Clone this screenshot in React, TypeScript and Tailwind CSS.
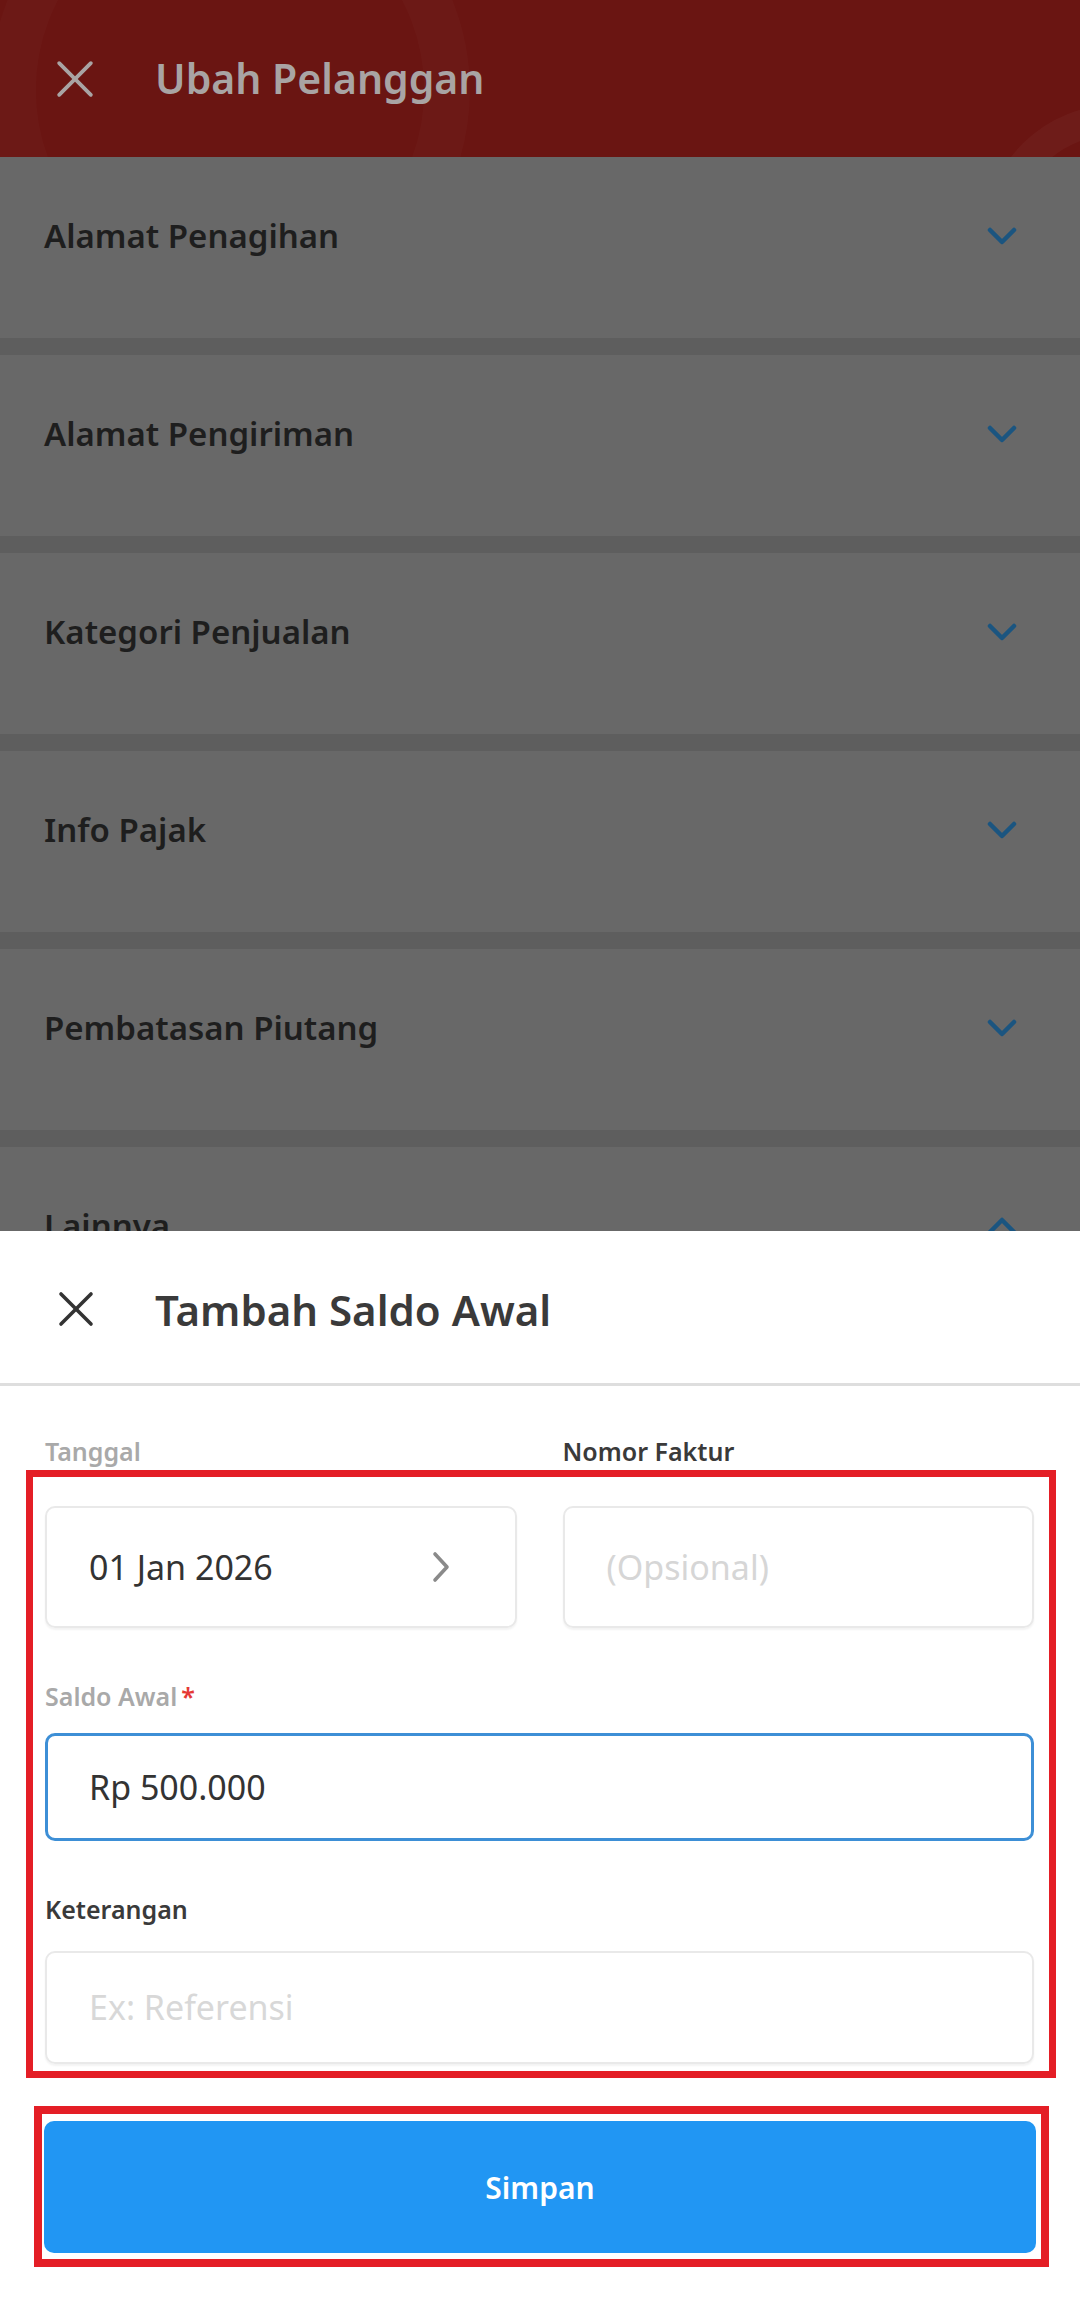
import React from "react";

const sections = [
  "Alamat Penagihan",
  "Alamat Pengiriman",
  "Kategori Penjualan",
  "Info Pajak",
  "Pembatasan Piutang",
];

function CloseIcon({ className }: { className?: string }) {
  return (
    <svg viewBox="0 0 36 36" className={className} fill="none" stroke="currentColor" strokeWidth="3.6" strokeLinecap="round">
      <line x1="3" y1="3" x2="33" y2="33" />
      <line x1="33" y1="3" x2="3" y2="33" />
    </svg>
  );
}

function Chevron({ up }: { up?: boolean }) {
  return (
    <svg viewBox="0 0 30 20" className="w-[30px] h-[20px] text-[#1b5580]" fill="none" stroke="currentColor" strokeWidth="4.5" strokeLinecap="round" strokeLinejoin="round">
      {up ? <polyline points="3,16 15,4 27,16" /> : <polyline points="3,4 15,16 27,4" />}
    </svg>
  );
}

function Section({ label, up }: { label: string; up?: boolean }) {
  return (
    <div className="h-[181px] shrink-0 bg-[#686868] pl-[44px] pr-[63px]">
      <div className="h-[158px] flex items-center justify-between">
        <span className="text-[33px] font-semibold text-[#1e1e1e]">{label}</span>
        <Chevron up={up} />
      </div>
    </div>
  );
}

export default function App() {
  return (
    <div
      className="w-[1080px] h-[2297px] overflow-hidden flex flex-col bg-white"
      style={{ fontFamily: '"Noto Sans", "Open Sans", sans-serif' }}
    >
      {/* dimmed page behind the sheet */}
      <div className="h-[1231px] shrink-0 overflow-hidden flex flex-col bg-[#5e5e5e]">
        <header className="relative h-[157px] shrink-0 overflow-hidden bg-[#6a1512] flex items-center pl-[56px]">
          <div className="absolute -left-[10px] -top-[150px] w-[480px] h-[480px] rounded-full border-[46px] border-white/[0.02]" />
          <div className="absolute left-[985px] top-[105px] w-[260px] h-[260px] rounded-full border-[30px] border-white/[0.03]" />
          <CloseIcon className="relative w-[38px] h-[38px] text-[#a9a4a4]" />
          <h1 className="relative ml-[61px] text-[41px] font-semibold text-[#a9a4a4]">Ubah Pelanggan</h1>
        </header>
        <div className="flex flex-col gap-[17px]">
          {sections.map((s) => (
            <Section key={s} label={s} />
          ))}
          <Section label="Lainnya" up />
        </div>
      </div>

      {/* bottom sheet */}
      <div className="flex-1 flex flex-col bg-white">
        <div className="h-[152px] shrink-0 flex items-center pl-[58px] pt-[4px]">
          <CloseIcon className="w-[36px] h-[36px] text-[#333333]" />
          <h2 className="ml-[61px] text-[42px] font-semibold text-[#3a3a3a]">Tambah Saldo Awal</h2>
        </div>
        <div className="h-[3px] bg-[#dedede]" />

        <div className="grid grid-cols-2 gap-[46px] pl-[45px] pr-[46px] pt-[50px]">
          <span className="text-[25px] leading-[30px] font-semibold text-[#a9a9a9]">Tanggal</span>
          <span className="text-[25px] leading-[30px] font-semibold text-[#3a3a3a]">Nomor Faktur</span>
        </div>

        <div className="ml-[26px] w-[1030px] mt-[4px] border-[7px] border-[#e41e26] pl-[12px] pr-[15px] pt-[29px] pb-[7px]">
          <div className="grid grid-cols-2 gap-[46px]">
            <div className="h-[122px] rounded-[10px] border-2 border-[#e9e9e9] shadow-[0_2px_2px_rgba(0,0,0,0.05)] flex items-center justify-between pl-[42px] pr-[64px]">
              <span className="text-[34px] text-[#333333]">01 Jan 2026</span>
              <svg viewBox="0 0 20 32" className="w-[20px] h-[32px] text-[#8a8a8a]" fill="none" stroke="currentColor" strokeWidth="3.6" strokeLinecap="round" strokeLinejoin="round">
                <polyline points="4,3 16,16 4,29" />
              </svg>
            </div>
            <div className="h-[122px] rounded-[10px] border-2 border-[#e9e9e9] shadow-[0_2px_2px_rgba(0,0,0,0.05)] flex items-center pl-[42px]">
              <span className="text-[34px] text-[#d6d6d6]">(Opsional)</span>
            </div>
          </div>

          <div className="mt-[53px] text-[25px] leading-[30px] font-semibold text-[#a9a9a9]">
            Saldo Awal<span className="ml-[4px] text-[#e53935]">*</span>
          </div>
          <div className="mt-[22px] h-[108px] rounded-[10px] border-[3px] border-[#3d8fd6] flex items-center pl-[41px]">
            <span className="text-[34px] text-[#333333]">Rp 500.000</span>
          </div>

          <div className="mt-[53px] text-[25px] leading-[30px] font-semibold text-[#3a3a3a]">Keterangan</div>
          <div className="mt-[27px] h-[113px] rounded-[10px] border-2 border-[#e9e9e9] shadow-[0_2px_2px_rgba(0,0,0,0.05)] flex items-center pl-[42px]">
            <span className="text-[34px] text-[#d8d8d8]">Ex: Referensi</span>
          </div>
        </div>

        <div className="ml-[34px] w-[1015px] mt-[28px] border-[8px] border-[#e41e26] pl-[2px] pr-[5px] pt-[7px] pb-[6px]">
          <button className="w-full h-[132px] rounded-[10px] bg-[#2196f3] text-white text-[30px] font-semibold">
            Simpan
          </button>
        </div>
      </div>
    </div>
  );
}
